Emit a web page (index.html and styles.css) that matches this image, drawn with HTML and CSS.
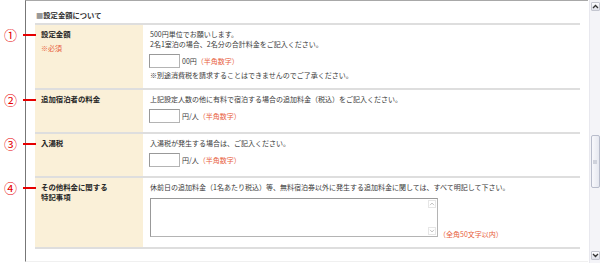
FILE: index.html
```html
<!DOCTYPE html>
<html lang="ja">
<head>
<meta charset="utf-8">
<link rel="stylesheet" href="styles.css">
</head>
<body>
<div class="page">
  <div class="frame">
    <div class="heading"><span class="sq">■</span>設定金額について</div>
    <div class="table">
      <div class="row r1">
        <div class="ann"><span class="num">①</span><span class="line"></span></div>
        <div class="label">
          <div class="lt">設定金額</div>
          <div class="req">※必須</div>
        </div>
        <div class="cell">
          <div class="tx">500円単位でお願いします。</div>
          <div class="tx">2名1室泊の場合、2名分の合計料金をご記入ください。</div>
          <div class="inrow"><span class="box"></span><span class="unit">00円</span><span class="red">（半角数字）</span></div>
          <div class="tx note">※別途消費税を請求することはできませんのでご了承ください。</div>
        </div>
      </div>
      <div class="row r2">
        <div class="ann"><span class="num">②</span><span class="line"></span></div>
        <div class="label"><div class="lt">追加宿泊者の料金</div></div>
        <div class="cell">
          <div class="tx">上記設定人数の他に有料で宿泊する場合の追加料金（税込）をご記入ください。</div>
          <div class="inrow"><span class="box"></span><span class="unit">円/人</span><span class="red">（半角数字）</span></div>
        </div>
      </div>
      <div class="row r3">
        <div class="ann"><span class="num">③</span><span class="line"></span></div>
        <div class="label"><div class="lt">入湯税</div></div>
        <div class="cell">
          <div class="tx">入湯税が発生する場合は、ご記入ください。</div>
          <div class="inrow"><span class="box"></span><span class="unit">円/人</span><span class="red">（半角数字）</span></div>
        </div>
      </div>
      <div class="row r4">
        <div class="ann"><span class="num">④</span><span class="line"></span></div>
        <div class="label"><div class="lt">その他料金に関する<br>特記事項</div></div>
        <div class="cell">
          <div class="tx">休前日の追加料金（1名あたり税込）等、無料宿泊券以外に発生する追加料金に関しては、すべて明記して下さい。</div>
          <div class="tarow">
            <div class="tarea">
              <div class="tbar">
                <span class="tarr"><svg width="6" height="4" viewBox="0 0 6 4"><path d="M1 3.2 L3 1 L5 3.2" fill="none" stroke="#c4c4c4" stroke-width="1"/></svg></span>
                <span class="tarr"><svg width="6" height="4" viewBox="0 0 6 4"><path d="M1 0.8 L3 3 L5 0.8" fill="none" stroke="#c4c4c4" stroke-width="1"/></svg></span>
              </div>
            </div>
            <span class="red">（全角50文字以内）</span>
          </div>
        </div>
      </div>
    </div>
  </div>
  <div class="sbar">
    <div class="sbtn up"><svg width="7" height="5" viewBox="0 0 7 5"><path d="M1 4 L3.5 1.5 L6 4" fill="none" stroke="#333" stroke-width="1.3"/></svg></div>
    <div class="thumb"><span class="grip"></span></div>
    <div class="sbtn down"><svg width="7" height="5" viewBox="0 0 7 5"><path d="M1 1 L3.5 3.5 L6 1" fill="none" stroke="#333" stroke-width="1.3"/></svg></div>
  </div>
</div>
</body>
</html>
```

FILE: styles.css
```css
html, body {
  margin: 0;
  padding: 0;
  background: #fff;
}
body {
  font-family: "Noto Sans CJK JP", "Noto Sans", sans-serif;
  font-size: 7px;
  line-height: 10px;
  color: #3a3a3a;
  width: 600px;
  height: 263px;
  overflow: hidden;
}
.page {
  display: flex;
  height: 263px;
}
.frame {
  margin-left: 25px;
  width: 563px;
  height: 262px;
  border-left: 1px solid #777;
  border-top: 1px solid #a8a8a8;
  border-bottom: 1px solid #f0f0f0;
  box-sizing: border-box;
  padding-left: 9px;
}
.heading {
  margin-top: 9px;
  font-weight: bold;
  font-size: 7.3px;
  color: #333;
  padding-left: 1px;
}
.heading .sq {
  color: #999;
  font-weight: normal;
}
.table {
  margin-top: 3px;
  width: 545px;
  border-top: 2px solid #dedede;
}
.row {
  position: relative;
  display: grid;
  grid-template-columns: 108px 1fr;
  border-bottom: 2px solid #dedede;
}
.ann {
  position: absolute;
  left: -31px;
  top: 3px;
  height: 14px;
  display: flex;
  align-items: center;
}
.num {
  color: #e60000;
  font-size: 13px;
  line-height: 14px;
  width: 13px;
}
.line {
  margin-left: 6px;
  width: 13px;
  height: 2px;
  background: #e60000;
}
.label {
  background: #faf0d8;
  padding: 4px 0 0 6px;
}
.lt {
  font-weight: bold;
  color: #262626;
  font-size: 7.4px;
}
.req {
  margin-top: 4px;
  color: #e8603c;
}
.cell {
  padding: 4px 0 8px 7px;
}
.r2 .cell, .r3 .cell {
  padding-bottom: 9px;
}
.r4 .cell {
  padding-bottom: 10px;
}
.inrow {
  margin-top: 5px;
  height: 14px;
  display: flex;
  align-items: center;
}
.box {
  width: 29px;
  height: 12px;
  border: 1px solid #b4b4b4;
  border-top-color: #999;
  border-left-color: #999;
  background: #fff;
  margin-left: -1px;
}
.unit {
  margin-left: 2px;
}
.red {
  color: #e8603c;
}
.note {
  margin-top: 2px;
}
.tarow {
  margin-top: 6px;
  display: flex;
  align-items: flex-end;
}
.tarea {
  width: 288px;
  height: 39px;
  box-sizing: border-box;
  border: 1px solid #b4b4b4;
  border-top-color: #999;
  border-left-color: #999;
  display: flex;
  justify-content: flex-end;
}
.tbar {
  width: 9px;
  display: flex;
  flex-direction: column;
  justify-content: space-between;
  align-items: center;
  padding: 1px 1px 1px 0;
}
.tarr {
  width: 8px;
  height: 8px;
  border: 1px solid #e6e6e6;
  box-sizing: border-box;
  display: flex;
  align-items: center;
  justify-content: center;
}
.tarow .red {
  margin-left: 1px;
  margin-bottom: -2px;
}
.sbar {
  margin-left: 1px;
  width: 11px;
  height: 263px;
  background: #f4f4f8;
  border-left: 1px solid #e8e8ee;
  box-sizing: border-box;
  display: flex;
  flex-direction: column;
  align-items: center;
}
.sbtn {
  width: 9px;
  height: 9px;
  box-sizing: border-box;
  border: 1px solid #c4c6d0;
  border-radius: 1px;
  background: linear-gradient(#fdfdff, #dfe1ea);
  display: flex;
  align-items: center;
  justify-content: center;
}
.up {
  margin-top: 2px;
}
.thumb {
  margin-top: 124px;
  width: 9px;
  height: 53px;
  box-sizing: border-box;
  border: 1px solid #b8bccb;
  border-radius: 2px;
  background: linear-gradient(90deg, #f8f8fc, #e6e8f0);
  display: flex;
  align-items: center;
  justify-content: center;
}
.grip {
  width: 4px;
  height: 4px;
  background: #cfd2dc;
}
.down {
  margin-top: auto;
  margin-bottom: 3px;
}
```
